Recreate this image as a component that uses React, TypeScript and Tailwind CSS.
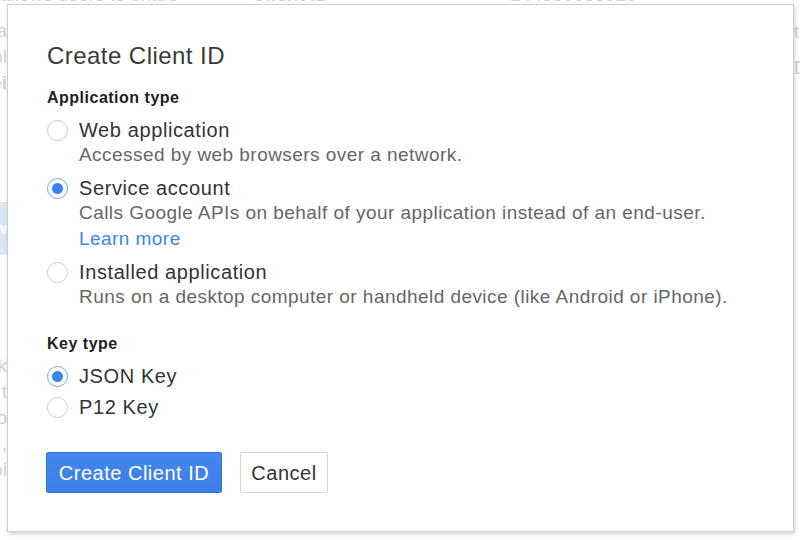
import type { ReactNode } from "react";

function Radio({ checked }: { checked?: boolean }) {
  return checked ? (
    <span className="flex h-[21px] w-[21px] shrink-0 items-center justify-center rounded-full border-[1.5px] border-[#6ea5f2] bg-white">
      <span className="h-[11px] w-[11px] rounded-full bg-[#3b84ee]" />
    </span>
  ) : (
    <span className="h-[21px] w-[21px] shrink-0 rounded-full border border-[#c9c9c9] bg-white" />
  );
}

function Option({ checked, label, children }: { checked?: boolean; label: string; children?: ReactNode }) {
  return (
    <div>
      <label className="flex items-center gap-[11px] text-[20px] leading-[24px] tracking-[0.6px] text-[#333]">
        <Radio checked={checked} />
        {label}
      </label>
      {children && <div className="pl-[32px] text-[19px] leading-[26px] tracking-[0.45px] text-[#666]">{children}</div>}
    </div>
  );
}

export default function App() {
  return (
    <div className="relative h-[540px] w-[800px] overflow-hidden bg-white font-['Liberation_Sans',Arial,sans-serif]">
      {/* faded page under the dialog */}
      <div className="flex flex-col text-[19px] text-[#d2d2d2]">
        <div className="-mt-[15px] flex h-[20px] items-end leading-[20px]">
          <span className="w-[252px] shrink-0 whitespace-nowrap">allows users to share</span>
          <span className="w-[258px] shrink-0 font-bold">Client ID</span>
          <span>144360055920-</span>
        </div>
        <div className="flex">
          <div className="flex w-[7px] shrink-0 flex-col items-end overflow-hidden leading-[26px]">
            <span className="mt-[13px]">ca</span>
            <span>pl</span>
            <span className="font-bold">ei</span>
            <span className="mt-[106px] flex h-[53px] w-[7px] items-center bg-[#dce7fa] text-[16px] font-bold text-white">w</span>
            <span className="mt-[98px]">k</span>
            <span>t</span>
            <span>o</span>
            <span>,</span>
            <span>pi</span>
          </div>
          <div className="flex-1" />
          <div className="flex w-[6px] shrink-0 flex-col overflow-hidden leading-[36px]">
            <span className="mt-[9px]">t</span>
            <span>D</span>
          </div>
        </div>
      </div>

      {/* dialog */}
      <div className="absolute left-[7px] top-[4px] flex h-[528px] w-[787px] flex-col border border-[#cfcfcf] bg-white px-[39px] shadow-[1px_2px_4px_rgba(0,0,0,0.18)]">
        <h2 className="mt-[36px] text-[24px] leading-[30px] tracking-[0.45px] text-[#3a3a3a]">Create Client ID</h2>

        <h3 className="mt-[16px] text-[16px] font-bold leading-[22px] tracking-[0.5px] text-[#222]">Application type</h3>
        <div className="mt-[9px] flex flex-col gap-[8px]">
          <Option label="Web application">Accessed by web browsers over a network.</Option>
          <Option checked label="Service account">
            <div>Calls Google APIs on behalf of your application instead of an end-user.</div>
            <a className="text-[#3b87ea]">Learn more</a>
          </Option>
          <Option label="Installed application">Runs on a desktop computer or handheld device (like Android or iPhone).</Option>
        </div>

        <h3 className="mt-[23px] text-[16px] font-bold leading-[22px] tracking-[0.5px] text-[#222]">Key type</h3>
        <div className="mt-[9px] flex flex-col gap-[7px]">
          <Option checked label="JSON Key" />
          <Option label="P12 Key" />
        </div>

        <div className="-ml-px mt-[33px] flex gap-[18px]">
          <button className="h-[41px] w-[176px] rounded-[2px] border border-[#3372d6] bg-gradient-to-b from-[#4487ee] to-[#3b7fe6] text-[20px] tracking-[0.5px] text-white">
            Create Client ID
          </button>
          <button className="h-[41px] w-[88px] rounded-[2px] border border-[#d4d4d4] bg-white text-[20px] tracking-[0.5px] text-[#333]">
            Cancel
          </button>
        </div>
      </div>
    </div>
  );
}
